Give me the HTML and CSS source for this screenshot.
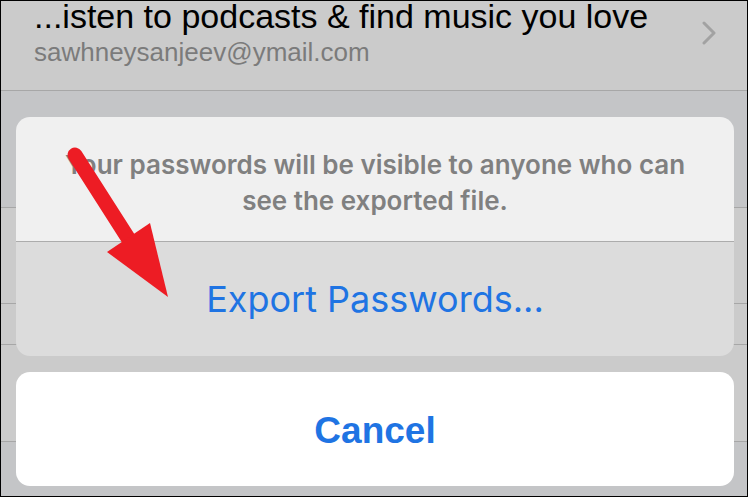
FILE: index.html
```html
<!DOCTYPE html>
<html lang="en">
<head>
    <meta charset="UTF-8">
    <meta name="viewport" content="width=device-width, initial-scale=1.0">
    <title>Export Passwords</title>
    <link rel="stylesheet" href="styles.css">
</head>
<body>
    <div class="screen">
        <!-- danh sách mật khẩu phía sau (đã bị làm mờ) -->
        <div class="list">
            <div class="row row-account">
                <div class="row-text">
                    <div class="row-title">...isten to podcasts &amp; find music you love</div>
                    <div class="row-sub">sawhneysanjeev@ymail.com</div>
                </div>
                <svg class="chevron" width="16" height="24" viewBox="0 0 16 24">
                    <path d="M3 2 L13 12 L3 22" fill="none" stroke="#a2a2a2" stroke-width="3" stroke-linecap="round" stroke-linejoin="round"/>
                </svg>
            </div>
            <div class="section-gap"></div>
            <div class="row row-a"></div>
            <div class="row row-b"></div>
            <div class="row row-c"></div>
            <div class="list-end"></div>
        </div>

        <!-- action sheet -->
        <div class="sheet">
            <div class="sheet-group">
                <p class="sheet-message">Your passwords will be visible to anyone who can see the exported file.</p>
                <button class="sheet-btn export-btn">Export Passwords...</button>
            </div>
            <button class="sheet-btn cancel-btn">Cancel</button>
        </div>

        <svg class="arrow" width="200" height="320" viewBox="0 0 200 320">
            <line x1="75" y1="155" x2="128" y2="238" stroke="#ed1c24" stroke-width="15" stroke-linecap="round"/>
            <polygon points="107,252 150,223 168,297" fill="#ed1c24"/>
        </svg>
    </div>
</body>
</html>
```

FILE: styles.css
```css
* {
    margin: 0;
    padding: 0;
    box-sizing: border-box;
}

body {
    background-color: #000;
    font-family: "Liberation Sans", Arial, sans-serif;
}

/* khung màn hình có viền đen 1px */
.screen {
    position: relative;
    width: 748px;
    height: 497px;
    border: 1px solid #000;
    overflow: hidden;
    background-color: #c4c5c7;
}

.list {
    display: flex;
    flex-direction: column;
    height: 100%;
}

.row {
    background-color: #cbcbcb;
    border-bottom: 1px solid #a7a7a7;
}

.row-account {
    height: 90px;
    display: flex;
    align-items: flex-start;
    justify-content: space-between;
    padding: 0 30px 0 33px;
}

.row-title {
    font-size: 34px;
    line-height: 30px;
    color: #000;
}

.row-sub {
    font-size: 26px;
    line-height: 30px;
    color: #7b7b7b;
    margin-top: 6px;
}

.chevron {
    margin-top: 20px;
}

.section-gap {
    height: 117px;
    border-bottom: 1px solid #a7a7a7;
}

.row-a {
    height: 96px;
}

.row-b {
    height: 41px;
}

.row-c {
    height: 97px;
}

.list-end {
    flex: 1;
}

/* action sheet */
.sheet {
    position: absolute;
    top: 116px;
    left: 15px;
    width: 718px;
    display: flex;
    flex-direction: column;
    gap: 16px;
}

.sheet-group {
    border-radius: 14px;
    overflow: hidden;
    display: flex;
    flex-direction: column;
}

.sheet-message {
    background-color: #f0f0f0;
    border-bottom: 1px solid #acacac;
    height: 125px;
    padding: 30px 42px 0;
    text-align: center;
    font-family: Inter, "Liberation Sans", sans-serif;
    font-weight: 600;
    font-size: 26px;
    line-height: 36px;
    color: #808080;
}

.sheet-btn {
    border: none;
    width: 100%;
    font-family: Inter, "Liberation Sans", sans-serif;
    color: #1f74e3;
    cursor: pointer;
}

.export-btn {
    background-color: #dcdcdc;
    height: 114px;
    font-size: 36px;
    font-weight: 400;
}

.cancel-btn {
    background-color: #fff;
    height: 114px;
    border-radius: 14px;
    padding-top: 3px;
    font-family: "Liberation Sans", Arial, sans-serif;
    font-size: 37px;
    font-weight: 700;
}

.arrow {
    position: absolute;
    top: -1px;
    left: -1px;
}
```
